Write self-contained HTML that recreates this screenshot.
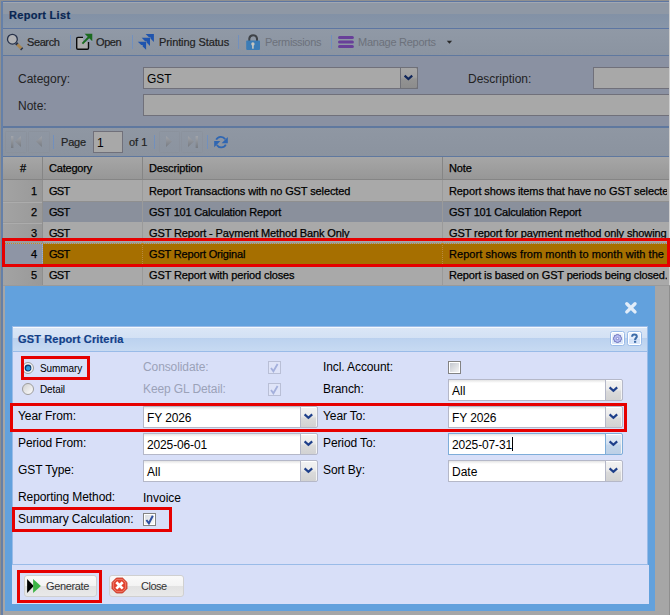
<!DOCTYPE html>
<html><head><meta charset="utf-8">
<style>
*{box-sizing:border-box}
html,body{margin:0;padding:0}
body{width:670px;height:615px;overflow:hidden;position:relative;background:#8f8f8f;font-family:"Liberation Sans",sans-serif;font-size:11px;color:#222}
.a{position:absolute}
.t{position:absolute;white-space:nowrap;line-height:1;margin-top:1px}
.bsep{position:absolute;width:1px;height:14px;background:#7290bd}
.mfld{position:absolute;background:#a8a8a8;border:1px solid #70707a}
.gcell{position:absolute;white-space:nowrap;line-height:1;font-size:11px;color:#000;letter-spacing:-0.12px;-webkit-text-stroke:0.25px #000}
.red{position:absolute;border:3px solid #e60000}
.lbl{position:absolute;font-size:12px;color:#000;white-space:nowrap;line-height:1}
.fld{position:absolute;background:#fff linear-gradient(#e4e4e4,#fff 3px);border:1px solid #b5b8c8}
.trg{position:absolute;width:18px;border:1px solid #b5b8c8;background:linear-gradient(#f3f3f3,#ebebeb 45%,#dadada 58%,#d2d2d2);border-radius:0 2px 2px 0;box-shadow:inset 0 1px 0 #fff,inset -1px 0 0 #f4f4f4}
</style></head>
<body>
<!-- ============ BACKGROUND APP (masked) ============ -->
<div class="a" style="left:1px;top:1px;width:669px;height:1px;background:#5d76a2"></div>
<div class="a" style="left:1px;top:1px;width:2px;height:614px;background:#6580a8"></div>
<!-- header -->
<div class="a" style="left:3px;top:2px;width:667px;height:12px;background:#8f98a5;border-top:1px solid #a1a7b1"></div>
<div class="a" style="left:3px;top:14px;width:667px;height:14px;background:linear-gradient(#8291a6,#8896a8)"></div>
<div class="a" style="left:3px;top:28px;width:667px;height:1px;background:#5d76a2"></div>
<div class="t" style="left:9px;top:9px;font-weight:bold;font-size:11px;color:#0a2652;letter-spacing:0.3px;-webkit-text-stroke:0.2px #0a2652">Report List</div>
<!-- toolbar -->
<div class="a" style="left:3px;top:29px;width:667px;height:26px;background:linear-gradient(#9099a6,#8b94a1)"></div>
<div class="a" style="left:3px;top:55px;width:667px;height:1px;background:#5f789f"></div>
<div class="t" style="-webkit-text-stroke:0.2px #222;left:27px;top:36px;letter-spacing:-0.4px">Search</div>
<div class="bsep" style="left:70px;top:35px"></div>
<div class="t" style="-webkit-text-stroke:0.2px #222;left:96px;top:36px;letter-spacing:-0.4px">Open</div>
<div class="bsep" style="left:132px;top:35px"></div>
<div class="t" style="-webkit-text-stroke:0.2px #222;left:159px;top:36px;letter-spacing:-0.1px">Printing Status</div>
<div class="bsep" style="left:238px;top:35px"></div>
<div class="t" style="left:265px;top:36px;letter-spacing:-0.35px;color:#6c717b">Permissions</div>
<div class="bsep" style="left:331px;top:35px"></div>
<div class="t" style="left:358px;top:36px;letter-spacing:-0.25px;color:#6c717b">Manage Reports</div>
<!-- form -->
<div class="a" style="left:3px;top:56px;width:667px;height:70px;background:#8a91a2"></div>
<div class="a" style="left:3px;top:126px;width:667px;height:2px;background:#5f789f"></div>
<div class="t" style="left:18px;top:72px;font-size:12px">Category:</div>
<div class="t" style="left:18px;top:99px;font-size:12px">Note:</div>
<div class="mfld" style="left:143px;top:67px;width:275px;height:22px"></div>
<div class="t" style="left:147px;top:72px;font-size:12px;color:#000">GST</div>
<div class="a" style="left:400px;top:67px;width:18px;height:22px;border:1px solid #6f7078;border-radius:0 2px 2px 0;background:linear-gradient(#a6a6a6,#a0a0a0 45%,#939393 55%,#8c8c8c)"></div>
<svg class="a" style="left:400px;top:67px" width="18" height="22" viewBox="400 67 18 22"><path d="M404.6,75.6 L408.4,79 L412.2,75.6" fill="none" stroke="#10265a" stroke-width="2.2"/></svg>
<div class="t" style="left:468px;top:72px;font-size:12px">Description:</div>
<div class="mfld" style="left:593px;top:67px;width:80px;height:22px"></div>
<div class="mfld" style="left:143px;top:94px;width:530px;height:22px"></div>
<!-- paging toolbar -->
<div class="a" style="left:3px;top:128px;width:667px;height:28px;background:linear-gradient(#8f97a3,#8b939f)"></div>
<div class="a" style="left:3px;top:156px;width:667px;height:1px;background:#5f789f"></div>
<div class="bsep" style="left:53px;top:135px"></div>
<div class="t" style="-webkit-text-stroke:0.2px #222;left:61px;top:136px;letter-spacing:-0.2px">Page</div>
<div class="mfld" style="left:93px;top:131px;width:30px;height:22px"></div>
<div class="t" style="left:97px;top:136px;font-size:12px;color:#000">1</div>
<div class="t" style="-webkit-text-stroke:0.2px #222;left:129px;top:136px">of 1</div>
<div class="bsep" style="left:154px;top:135px"></div>
<div class="bsep" style="left:207px;top:135px"></div>
<!-- grid header -->
<div class="a" style="left:3px;top:157px;width:667px;height:23px;background:linear-gradient(#a6a6a6,#979797);border-bottom:1px solid #858585"></div>
<div class="a" style="left:42px;top:157px;width:1px;height:22px;background:#858585"></div>
<div class="a" style="left:142px;top:157px;width:1px;height:22px;background:#858585"></div>
<div class="a" style="left:442px;top:157px;width:1px;height:22px;background:#858585"></div>
<div class="gcell" style="left:20px;top:163px">#</div>
<div class="gcell" style="left:49px;top:163px;letter-spacing:-0.2px">Category</div>
<div class="gcell" style="left:149px;top:163px;letter-spacing:-0.15px">Description</div>
<div class="gcell" style="left:449px;top:163px;letter-spacing:-0.1px">Note</div>
<!-- grid rows -->
<div id="rows"></div>
<div class="a" style="left:3px;top:180px;width:667px;height:21px;background:#a9a9a9"></div>
<div class="a" style="left:3px;top:202px;width:667px;height:20px;background:#8a909c"></div>
<div class="a" style="left:3px;top:222px;width:667px;height:21px;background:#a9a9a9"></div>
<div class="a" style="left:3px;top:243px;width:667px;height:21px;background:#a66f00"></div>
<div class="a" style="left:3px;top:264px;width:667px;height:22px;background:#a9a9a9"></div>
<div class="a" style="left:3px;top:180px;width:39px;height:106px;background:linear-gradient(90deg,#a3a3a3,#999)"></div>
<div class="a" style="left:3px;top:243px;width:39px;height:21px;background:#8e95a5"></div>
<div class="a" style="left:3px;top:242px;width:667px;height:1px;background:#9d9d9d"></div>
<div class="a" style="left:3px;top:201px;width:39px;height:1px;background:#9a9a9a"></div>
<div class="a" style="left:3px;top:202px;width:39px;height:1px;background:#acacac"></div>
<div class="a" style="left:3px;top:222px;width:39px;height:1px;background:#9a9a9a"></div>
<div class="a" style="left:3px;top:223px;width:39px;height:1px;background:#acacac"></div>
<div class="a" style="left:3px;top:264px;width:39px;height:1px;background:#acacac"></div>
<div class="a" style="left:43px;top:263px;width:627px;height:1px;background:#a66f00"></div>
<div class="a" style="left:3px;top:263px;width:39px;height:1px;background:#8e95a5"></div>
<div class="a" style="left:3px;top:243px;width:667px;height:1px;background:repeating-linear-gradient(90deg,#c98a20 0 1px,#94a0b8 1px 2px)"></div>
<div class="a" style="left:42px;top:180px;width:1px;height:106px;background:#8f8f8f"></div>
<div class="a" style="left:142px;top:180px;width:1px;height:106px;background:#9a9a9a"></div>
<div class="a" style="left:442px;top:180px;width:1px;height:106px;background:#9a9a9a"></div>
<div class="a" style="left:42px;top:243px;width:1px;height:21px;background:repeating-linear-gradient(#7f9bd0 0 1px,#a9aec0 1px 2px)"></div>
<div class="a" style="left:142px;top:243px;width:1px;height:21px;background:repeating-linear-gradient(#b88a40 0 1px,#a66f00 1px 2px)"></div>
<div class="a" style="left:442px;top:243px;width:1px;height:21px;background:repeating-linear-gradient(#b88a40 0 1px,#a66f00 1px 2px)"></div>

<div class="gcell" style="left:31px;top:186px">1</div>
<div class="gcell" style="left:49px;top:186px;letter-spacing:-0.7px">GST</div>
<div class="gcell" style="left:149px;top:186px;letter-spacing:-0.115px">Report Transactions with no GST selected</div>


<div class="gcell" style="left:31px;top:207px">2</div>
<div class="gcell" style="left:49px;top:207px;letter-spacing:-0.7px">GST</div>
<div class="gcell" style="left:149px;top:207px;letter-spacing:-0.2px">GST 101 Calculation Report</div>


<div class="gcell" style="left:31px;top:228px">3</div>
<div class="gcell" style="left:49px;top:228px;letter-spacing:-0.7px">GST</div>
<div class="gcell" style="left:149px;top:228px;letter-spacing:-0.13px">GST Report - Payment Method Bank Only</div>


<div class="gcell" style="left:31px;top:249px">4</div>
<div class="gcell" style="left:49px;top:249px;letter-spacing:-0.7px">GST</div>
<div class="gcell" style="left:149px;top:249px;letter-spacing:-0.17px">GST Report Original</div>


<div class="gcell" style="left:31px;top:270px">5</div>
<div class="gcell" style="left:49px;top:270px;letter-spacing:-0.7px">GST</div>
<div class="gcell" style="left:149px;top:270px;letter-spacing:-0.12px">GST Report with period closes</div>


<!-- toolbar icons -->
<svg class="a" style="left:0;top:0" width="670" height="160" viewBox="0 0 670 160">
  <!-- search -->
  <circle cx="12.4" cy="39.2" r="4.9" fill="#b0b1b4" stroke="#27324a" stroke-width="1.3"/>
  <line x1="17" y1="44" x2="21.6" y2="48.8" stroke="#a8854f" stroke-width="3"/>
  <line x1="16.2" y1="43.2" x2="17.4" y2="44.4" stroke="#27324a" stroke-width="3"/>
  <line x1="21.2" y1="48.4" x2="22.2" y2="49.4" stroke="#27324a" stroke-width="3"/>
  <!-- open -->
  <rect x="76.7" y="37.4" width="11.8" height="11.8" rx="1.2" fill="#adadad" stroke="#0a0a0a" stroke-width="1.4"/>
  <rect x="83" y="34" width="10" height="8" fill="#929cad"/>
  <polygon points="84.6,33.8 92.3,33.8 92.3,41.3" fill="#1b6a1f"/>
  <line x1="82.4" y1="43.6" x2="89" y2="37" stroke="#1b6a1f" stroke-width="2"/>
  <!-- printing status -->
  <g fill="#1f54ae">
    <polygon points="145.6,33.9 153.9,33.9 153.9,42 150.5,38.6 150.5,37.3 149,37.3"/>
    <polygon points="141.7,37.8 150,37.8 150,45.9 146.6,42.5 146.6,41.2 145.1,41.2"/>
    <polygon points="137.8,41.7 146.1,41.7 146.1,49.8 142.7,46.4 142.7,45.1 141.2,45.1"/>
  </g>
  <!-- lock -->
  <path d="M249.3,41 V38.5 A3.9,4 0 0 1 257,38.5 V41" fill="none" stroke="#3f4348" stroke-width="2"/>
  <rect x="246.2" y="40.6" width="13.8" height="9.3" rx="0.8" fill="#3b7cb6"/>
  <circle cx="252.9" cy="44" r="1.7" fill="#c6c6bf"/>
  <rect x="252.1" y="44.5" width="1.6" height="4.2" fill="#c6c6bf"/>
  <!-- manage -->
  <g stroke="#683f99" stroke-width="3" stroke-linecap="round">
    <line x1="339.5" y1="37.4" x2="352.4" y2="37.4"/>
    <line x1="339.5" y1="42" x2="352.4" y2="42"/>
    <line x1="339.5" y1="46.5" x2="352.4" y2="46.5"/>
  </g>
  <polygon points="446.8,40.8 452.1,40.8 449.45,43.8" fill="#2a2a2a"/>
  <!-- paging -->
  <g fill="none" stroke="#8a909a" stroke-width="1" opacity="0.6">
    <rect x="5.5" y="131.5" width="21" height="21" rx="1"/>
    <rect x="28.5" y="131.5" width="21" height="21" rx="1"/>
    <rect x="159.5" y="131.5" width="20" height="21" rx="1"/>
    <rect x="181.5" y="131.5" width="21" height="21" rx="1"/>
  </g>
  <defs><linearGradient id="pg" x1="0" y1="0" x2="0" y2="1"><stop offset="0" stop-color="#a2a5ab"/><stop offset="1" stop-color="#777b82"/></linearGradient></defs>
  <g fill="url(#pg)">
    <rect x="11" y="136" width="2.4" height="12"/>
    <polygon points="15,141.5 21,136 21,147"/>
    <polygon points="36,141.4 41.9,136 41.9,146.9"/>
    <polygon points="172,141.4 166,136 166,146.9"/>
    <polygon points="194,141.4 188,136 188,146.9"/>
    <rect x="195.6" y="136" width="2.4" height="12"/>
  </g>
  <!-- refresh -->
  <g fill="none" stroke="#2f66b2" stroke-width="1.8">
    <path d="M216.2,139.6 A5.2,5.2 0 0 1 225.2,139.2"/>
    <path d="M225.8,144.6 A5.2,5.2 0 0 1 216.8,145"/>
  </g>
  <polygon points="227.8,137 227.8,143.2 221.6,143.2" fill="#2f66b2"/>
  <polygon points="214.2,147.2 214.2,141 220.4,141" fill="#2f66b2"/>
</svg>
<div class="a" style="left:443px;top:180px;width:224px;height:106px;overflow:hidden"><div class="gcell" style="left:6px;top:6px;letter-spacing:-0.1px">Report shows items that have no GST selected</div><div class="gcell" style="left:6px;top:27px;letter-spacing:-0.2px">GST 101 Calculation Report</div><div class="gcell" style="left:6px;top:48px;letter-spacing:-0.1px">GST report for payment method only showing</div><div class="gcell" style="left:6px;top:69px;letter-spacing:0.055px">Report shows from month to month with the</div><div class="gcell" style="left:6px;top:90px;letter-spacing:-0.14px">Report is based on GST periods being closed.</div></div>
<div class="a" style="left:669px;top:0px;width:1px;height:286px;background:#d0d0d0"></div>
<div class="red" style="left:2px;top:238px;width:668px;height:29px"></div>

<!-- ============ WINDOW ============ -->
<div class="a" style="left:655px;top:286px;width:15px;height:329px;background:#a6a6a6"></div>
<div class="a" style="left:3px;top:286px;width:652px;height:329px;background:#a6a6a6"></div>
<div class="a" style="left:3px;top:285px;width:667px;height:1px;background:#9a9a9a"></div>
<div class="a" style="left:669px;top:286px;width:1px;height:329px;background:#8e8e8e"></div>
<div id="win" class="a" style="left:5px;top:286px;width:650px;height:325px;background:#62a1dd"></div>
<svg class="a" style="left:620px;top:296px" width="24" height="24" viewBox="620 296 24 24"><path d="M626.8,303.7L635,311.9M635,303.7L626.8,311.9" stroke="#e2edf9" stroke-width="3.4" stroke-linecap="round"/></svg>
<!-- inner panel -->
<div class="a" style="left:12px;top:326px;width:636px;height:239px;border:1px solid #99bbe8;background:#d8dff8"></div>
<div class="a" style="left:13px;top:327px;width:634px;height:25px;background:linear-gradient(#dae6f6,#d3e1f4 10px,#b9cfee 10px,#bcd2ef 11px,#c7daf2);border-top:1px solid #f4f8fd;border-bottom:1px solid #99bbe8"></div>
<div class="t" style="left:18px;top:333px;font-weight:bold;font-size:11px;color:#123f88;letter-spacing:0.15px;-webkit-text-stroke:0.2px #123f88">GST Report Criteria</div>
<svg class="a" style="left:608px;top:329px" width="36" height="20" viewBox="608 329 36 20">
<defs><linearGradient id="tg" x1="0" y1="0" x2="0" y2="1"><stop offset="0" stop-color="#eef4fd"/><stop offset="0.5" stop-color="#e4edfb"/><stop offset="0.5" stop-color="#d3e2f8"/><stop offset="1" stop-color="#dae7fa"/></linearGradient></defs>
<rect x="610.5" y="331.5" width="14" height="14" rx="2" fill="#fff" stroke="#99bbe8" stroke-width="1"/>
<rect x="612" y="333" width="11" height="11" fill="url(#tg)"/>
<rect x="627.5" y="331.5" width="14" height="14" rx="2" fill="#fff" stroke="#99bbe8" stroke-width="1"/>
<rect x="629" y="333" width="11" height="11" fill="url(#tg)"/>
<g transform="translate(617.5,338.5) scale(0.88)">
<path d="M-1.2,-4.6 L1.2,-4.6 L1.6,-3.3 L2.9,-3.9 L3.9,-2.9 L3.3,-1.6 L4.6,-1.2 L4.6,1.2 L3.3,1.6 L3.9,2.9 L2.9,3.9 L1.6,3.3 L1.2,4.6 L-1.2,4.6 L-1.6,3.3 L-2.9,3.9 L-3.9,2.9 L-3.3,1.6 L-4.6,1.2 L-4.6,-1.2 L-3.3,-1.6 L-3.9,-2.9 L-2.9,-3.9 L-1.6,-3.3 Z" fill="#b4baf0" stroke="#6a70b8" stroke-width="0.9"/>
<circle r="1.8" fill="#8a90d0"/><circle r="0.9" fill="#f4f6ff"/>
</g>
<path d="M632.1,336.8 C632.1,335 633.2,334.4 634.4,334.4 C635.8,334.4 636.8,335.2 636.8,336.4 C636.8,337.9 635.1,338.2 635.1,339.9" fill="none" stroke="#3d6ca8" stroke-width="2"/>
<rect x="634" y="340.8" width="2.2" height="2" fill="#3d6ca8"/>
</svg>


<!-- footer -->
<div class="a" style="left:12px;top:565px;width:637px;height:39px;background:#d8dff8"></div>

<!-- row 1 -->
<div class="t" style="left:40px;top:363px;font-size:10px;color:#000;letter-spacing:-0.1px">Summary</div>
<div class="t" style="left:143px;top:360px;font-size:12px;color:#9ba2b8;letter-spacing:-0.1px">Consolidate:</div>
<div class="t" style="left:323px;top:360px;font-size:12px;color:#000;letter-spacing:-0.1px">Incl. Account:</div>
<!-- row 2 -->
<div class="t" style="left:40px;top:384px;font-size:10px;color:#000;letter-spacing:-0.1px">Detail</div>
<div class="t" style="left:143px;top:382px;font-size:12px;color:#9ba2b8;letter-spacing:-0.1px">Keep GL Detail:</div>
<div class="t" style="left:323px;top:382px;font-size:12px;color:#000;letter-spacing:-0.1px">Branch:</div>
<div class="fld" style="left:448px;top:379px;width:158px;height:22px"></div>
<div class="trg" style="left:605px;top:379px;height:22px"></div>
<div class="t" style="left:452px;top:384px;font-size:12px;color:#000">All</div>
<!-- row 3 -->
<div class="t" style="left:18px;top:409px;font-size:12px;color:#000;letter-spacing:-0.1px">Year From:</div>
<div class="fld" style="left:143px;top:406px;width:158px;height:22px"></div>
<div class="trg" style="left:300px;top:406px;height:22px"></div>
<div class="t" style="left:147px;top:411px;font-size:12px;color:#000;letter-spacing:-0.1px">FY 2026</div>
<div class="t" style="left:323px;top:409px;font-size:12px;color:#000;letter-spacing:-0.1px">Year To:</div>
<div class="fld" style="left:448px;top:406px;width:158px;height:22px"></div>
<div class="trg" style="left:605px;top:406px;height:22px"></div>
<div class="t" style="left:452px;top:411px;font-size:12px;color:#000;letter-spacing:-0.1px">FY 2026</div>
<!-- row 4 -->
<div class="t" style="left:18px;top:436px;font-size:12px;color:#000;letter-spacing:-0.1px">Period From:</div>
<div class="fld" style="left:143px;top:433px;width:158px;height:22px"></div>
<div class="trg" style="left:300px;top:433px;height:22px"></div>
<div class="t" style="left:147px;top:438px;font-size:12px;color:#000;letter-spacing:-0.14px">2025-06-01</div>
<div class="t" style="left:323px;top:436px;font-size:12px;color:#000;letter-spacing:-0.1px">Period To:</div>
<div class="fld" style="left:448px;top:433px;width:158px;height:22px;border-color:#7eadd9"></div>
<div class="trg" style="left:605px;top:433px;height:22px;border-color:#7eadd9;background:linear-gradient(#e4edf7,#d6e3f1 45%,#c2d5ea 58%,#bcd0e6)"></div>
<div class="t" style="left:452px;top:438px;font-size:12px;color:#000;letter-spacing:-0.14px">2025-07-31</div>
<div class="a" style="left:512px;top:437px;width:1px;height:14px;background:#000"></div>
<!-- row 5 -->
<div class="t" style="left:18px;top:463px;font-size:12px;color:#000;letter-spacing:-0.1px">GST Type:</div>
<div class="fld" style="left:143px;top:460px;width:158px;height:22px"></div>
<div class="trg" style="left:300px;top:460px;height:22px"></div>
<div class="t" style="left:147px;top:465px;font-size:12px;color:#000">All</div>
<div class="t" style="left:323px;top:463px;font-size:12px;color:#000;letter-spacing:-0.1px">Sort By:</div>
<div class="fld" style="left:448px;top:460px;width:158px;height:22px"></div>
<div class="trg" style="left:605px;top:460px;height:22px"></div>
<div class="t" style="left:452px;top:465px;font-size:12px;color:#000">Date</div>
<!-- row 6 -->
<div class="t" style="left:18px;top:490px;font-size:12px;color:#000;letter-spacing:-0.1px">Reporting Method:</div>
<div class="t" style="left:143px;top:491px;font-size:12px;color:#000">Invoice</div>
<!-- row 7 -->
<div class="t" style="left:18px;top:512px;font-size:12px;color:#000;letter-spacing:-0.1px">Summary Calculation:</div>

<!-- buttons -->
<div class="a" style="left:24px;top:575px;width:73px;height:22px;border:1px solid #d0d0d0;border-radius:3px;background:linear-gradient(#fafafa,#f3f3f3 50%,#e2e2e2 50%,#e9e9e9)"></div>
<div class="t" style="left:46px;top:580px;font-size:11px;color:#333;letter-spacing:-0.35px">Generate</div>
<div class="a" style="left:109px;top:575px;width:75px;height:22px;border:1px solid #d0d0d0;border-radius:3px;background:linear-gradient(#fafafa,#f3f3f3 50%,#e2e2e2 50%,#e9e9e9)"></div>
<div class="t" style="left:141px;top:580px;font-size:11px;color:#333;letter-spacing:-0.5px">Close</div>

<!-- window icons -->
<svg class="a" style="left:0;top:280px" width="670" height="335" viewBox="0 280 670 335">
  <!-- radios -->
  <circle cx="28" cy="368" r="5.5" fill="#f4f4f4" stroke="#9c9c9c" stroke-width="1"/>
  <circle cx="28" cy="368" r="3.4" fill="#0c3c72"/>
  <circle cx="28.2" cy="368.2" r="2.2" fill="#2d9ad8"/>
  <defs><linearGradient id="rg" x1="0" y1="0" x2="1" y2="1"><stop offset="0" stop-color="#cfcfcf"/><stop offset="1" stop-color="#fff"/></linearGradient>
  <linearGradient id="cg" x1="0" y1="0" x2="1" y2="1"><stop offset="0" stop-color="#c4c8d0"/><stop offset="1" stop-color="#f4f4f4"/></linearGradient></defs>
  <circle cx="28" cy="389" r="5.5" fill="url(#rg)" stroke="#9c9c9c" stroke-width="1"/>
  <!-- disabled checkboxes -->
  <rect x="268.5" y="361.5" width="12" height="12" fill="#dfe4f8" stroke="#b9bfd6" stroke-width="1"/>
  <path d="M271,368 L273.4,371.3 L277.6,364" fill="none" stroke="#a4b0dc" stroke-width="1.8"/>
  <rect x="268.5" y="383.5" width="12" height="12" fill="#dfe4f8" stroke="#b9bfd6" stroke-width="1"/>
  <path d="M271,390 L273.4,393.3 L277.6,386" fill="none" stroke="#a4b0dc" stroke-width="1.8"/>
  <!-- incl account checkbox -->
  <rect x="448.5" y="361.5" width="12" height="12" fill="#fff" stroke="#838383" stroke-width="1"/>
  <rect x="450" y="363" width="9" height="9" fill="url(#cg)"/>
  <!-- summary calc checkbox -->
  <rect x="143.5" y="513.5" width="12" height="12" fill="#fff" stroke="#838383" stroke-width="1"/>
  <rect x="145" y="515" width="9" height="9" fill="url(#cg)" opacity="0.6"/>
  <path d="M146.4,520 L148.9,523.3 L152.8,515.8" fill="none" stroke="#2f4f9f" stroke-width="2"/>
  <!-- chevrons -->
  <g fill="none" stroke="#1e3f8a" stroke-width="2.2">
    <path d="M609.6,387.4 L613.4,390.8 L617.2,387.4"/>
    <path d="M609.6,414.4 L613.4,417.8 L617.2,414.4"/>
    <path d="M609.6,441.4 L613.4,444.8 L617.2,441.4"/>
    <path d="M609.6,468.4 L613.4,471.8 L617.2,468.4"/>
    <path d="M304.6,414.4 L308.4,417.8 L312.2,414.4"/>
    <path d="M304.6,441.4 L308.4,444.8 L312.2,441.4"/>
    <path d="M304.6,468.4 L308.4,471.8 L312.2,468.4"/>
  </g>
  <!-- generate icon -->
  <polygon points="27.1,579 33.8,586 27.1,593" fill="#000"/>
  <polygon points="33.1,579 40.9,586 33.1,593" fill="#3db446"/>
  <!-- close icon -->
  <polygon points="116.4,578 122.6,578 127,582.4 127,588.6 122.6,593 116.4,593 112,588.6 112,582.4" fill="#e2432f" stroke="#c23422" stroke-width="0.8"/>
  <polygon points="116.8,579.3 122.2,579.3 125.7,582.8 125.7,588.2 122.2,591.7 116.8,591.7 113.3,588.2 113.3,582.8" fill="none" stroke="#f39a88" stroke-width="0.7"/>
  <path d="M116.3,582.2 L122.7,588.6 M122.7,582.2 L116.3,588.6" stroke="#fff" stroke-width="2.7"/>
</svg>
<!-- red annotation boxes -->
<div class="red" style="left:21px;top:356px;width:69px;height:24px"></div>
<div class="red" style="left:10px;top:403px;width:617px;height:29px"></div>
<div class="red" style="left:12px;top:507px;width:160px;height:25px"></div>
<div class="red" style="left:17px;top:570px;width:85px;height:33px"></div>
</body></html>
